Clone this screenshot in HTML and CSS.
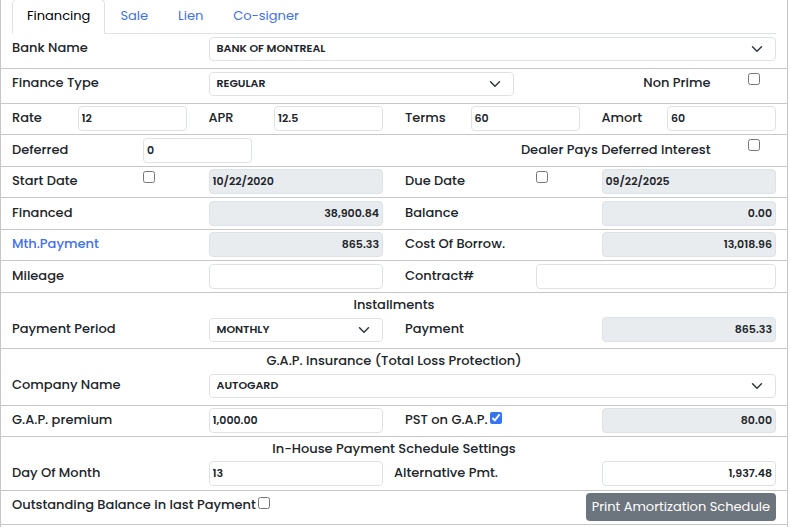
FILE: index.html
```
<!DOCTYPE html>
<html lang="en">

<head>
    <meta charset="UTF-8">
    <meta name="viewport" content="width=device-width, initial-scale=1.0">
    <title>Financing</title>
    <link rel="stylesheet" href="styles.css">
</head>

<body>
    <form class="panel">
        <!-- tabs -->
        <nav class="tabs">
            <a href="#financing" class="tab active">Financing</a>
            <a href="#sale" class="tab">Sale</a>
            <a href="#lien" class="tab">Lien</a>
            <a href="#cosigner" class="tab">Co-signer</a>
        </nav>

        <div class="row large">
            <label class="col-3" for="bank">Bank Name</label>
            <div class="col-9">
                <select id="bank"><option>BANK OF MONTREAL</option></select>
            </div>
        </div>

        <div class="row large">
            <label class="col-3" for="type">Finance Type</label>
            <div class="col-5">
                <select id="type"><option>REGULAR</option></select>
            </div>
            <label class="col-3 right" for="nonprime">Non Prime</label>
            <div class="col-1 center"><input type="checkbox" id="nonprime"></div>
        </div>

        <div class="row">
            <label class="col-1" for="rate">Rate</label>
            <div class="col-2"><input type="text" id="rate" value="12"></div>
            <label class="col-1" for="apr">APR</label>
            <div class="col-2"><input type="text" id="apr" value="12.5"></div>
            <label class="col-1" for="terms">Terms</label>
            <div class="col-2"><input type="text" id="terms" value="60"></div>
            <label class="col-1" for="amort">Amort</label>
            <div class="col-2"><input type="text" id="amort" value="60"></div>
        </div>

        <div class="row tall">
            <label class="col-2" for="deferred">Deferred</label>
            <div class="col-2"><input type="text" id="deferred" value="0"></div>
            <label class="col-7 right" for="dealer">Dealer Pays Deferred Interest</label>
            <div class="col-1 center"><input type="checkbox" id="dealer"></div>
        </div>

        <div class="row">
            <label class="col-2" for="startcheck">Start Date</label>
            <div class="col-1"><input type="checkbox" id="startcheck"></div>
            <div class="col-3"><input type="text" aria-label="Start Date" value="10/22/2020" disabled></div>
            <label class="col-2" for="duecheck">Due Date</label>
            <div class="col-1"><input type="checkbox" id="duecheck"></div>
            <div class="col-3"><input type="text" aria-label="Due Date" value="09/22/2025" disabled></div>
        </div>

        <div class="row tall">
            <label class="col-3" for="financed">Financed</label>
            <div class="col-3"><input type="text" id="financed" class="right" value="38,900.84" disabled></div>
            <label class="col-3" for="balance">Balance</label>
            <div class="col-3"><input type="text" id="balance" class="right" value="0.00" disabled></div>
        </div>

        <div class="row">
            <div class="col-3"><a href="#payment" class="link">Mth.Payment</a></div>
            <div class="col-3"><input type="text" aria-label="Mth.Payment" class="right" value="865.33" disabled></div>
            <label class="col-3" for="cost">Cost Of Borrow.</label>
            <div class="col-3"><input type="text" id="cost" class="right" value="13,018.96" disabled></div>
        </div>

        <div class="row tall">
            <label class="col-3" for="mileage">Mileage</label>
            <div class="col-3"><input type="text" id="mileage"></div>
            <label class="col-2" for="contract">Contract#</label>
            <div class="col-4"><input type="text" id="contract"></div>
        </div>

        <!-- installments -->
        <div class="row section">
            <h2 class="title">Installments</h2>
            <label class="col-3" for="period">Payment Period</label>
            <div class="col-3">
                <select id="period"><option>MONTHLY</option></select>
            </div>
            <label class="col-3" for="payment">Payment</label>
            <div class="col-3"><input type="text" id="payment" class="right" value="865.33" disabled></div>
        </div>

        <!-- G.A.P. -->
        <div class="row section gap">
            <h2 class="title">G.A.P. Insurance (Total Loss Protection)</h2>
            <label class="col-3" for="company">Company Name</label>
            <div class="col-9">
                <select id="company"><option>AUTOGARD</option></select>
            </div>
        </div>

        <div class="row">
            <label class="col-3" for="premium">G.A.P. premium</label>
            <div class="col-3"><input type="text" id="premium" value="1,000.00"></div>
            <div class="col-3 inline">
                <label for="pst">PST on G.A.P.</label>
                <input type="checkbox" id="pst" checked>
            </div>
            <div class="col-3"><input type="text" aria-label="PST amount" class="right" value="80.00" disabled></div>
        </div>

        <!-- in-house -->
        <div class="row house">
            <h2 class="title">In-House Payment Schedule Settings</h2>
            <label class="col-3" for="day">Day Of Month</label>
            <div class="col-3"><input type="text" id="day" value="13"></div>
            <label class="col-3 flush" for="alt">Alternative Pmt.</label>
            <div class="col-3"><input type="text" id="alt" class="right" value="1,937.48"></div>
        </div>

        <div class="row footer">
            <div class="inline">
                <label for="outstanding">Outstanding Balance in last Payment</label>
                <input type="checkbox" id="outstanding">
            </div>
            <button type="button" class="print">Print Amortization Schedule</button>
        </div>
    </form>
</body>

</html>
```
FILE: styles.css
```
* {
    box-sizing: border-box;
    margin: 0;
    padding: 0;
}

body {
    font-family: Poppins, Inter, "Open Sans", sans-serif;
    font-size: 13px;
    line-height: 24px;
    color: #212529;
    background: #fff;
}

.panel {
    margin-right: 3px;
    padding-bottom: 2px;
    border: 1px solid #c6c6c6;
    border-width: 0 1px;
    overflow: hidden;
}

/* tabs */
.tabs {
    display: flex;
    margin: -1px 11px 0;
    border-bottom: 1px solid #dee2e6;
}

.tab {
    height: 35px;
    margin-bottom: -1px;
    padding: 4px 14px;
    border: 1px solid transparent;
    border-radius: 5px 5px 0 0;
    color: #3d70f5;
    text-decoration: none;
}

.tab.active {
    color: #000;
    background: #fff;
    border-color: #dee2e6 #dee2e6 #fff;
}

/* rows */
.row {
    display: grid;
    grid-template-columns: repeat(12, 1fr);
    align-content: start;
    min-height: 31px;
    padding-top: 2px;
    border-bottom: 1px solid #c6c6c6;
}

.row.tall {
    min-height: 32px;
    padding-top: 3px;
}

.row.large {
    min-height: 35px;
}

.row.section {
    min-height: 56px;
    padding-top: 0;
}

.row.gap {
    min-height: 57px;
}

.row.house {
    min-height: 54px;
    padding-top: 0;
}

.row > * {
    min-width: 0;
    padding: 0 11px;
}

.col-1 { grid-column: span 1; }
.col-2 { grid-column: span 2; }
.col-3 { grid-column: span 3; }
.col-4 { grid-column: span 4; }
.col-5 { grid-column: span 5; }
.col-7 { grid-column: span 7; }
.col-9 { grid-column: span 9; }

.title {
    grid-column: 1 / -1;
    font-size: 13px;
    font-weight: 500;
    text-align: center;
}

label,
.link {
    font-weight: 500;
    white-space: nowrap;
}

.link {
    color: #3d70f5;
    text-decoration: none;
}

.right {
    text-align: right;
}

.center {
    display: flex;
    justify-content: center;
}

.row > .flush {
    padding-left: 0;
}

.inline {
    display: flex;
    gap: 2px;
}

/* controls */
input[type="text"],
select {
    display: block;
    width: 100%;
    height: 25px;
    padding: 0 3px;
    border: 1px solid #dee2e6;
    border-radius: 4px;
    font-family: inherit;
    font-size: 11px;
    font-weight: 600;
    color: #212529;
    background: #fff;
}

input[type="text"]:disabled {
    background: #e9ecef;
}

select {
    height: 24px;
    margin-top: 1px;
    padding: 0 32px 2px 7px;
    appearance: none;
    background: #fff url("data:image/svg+xml,%3Csvg xmlns='http://www.w3.org/2000/svg' viewBox='0 0 16 16'%3E%3Cpath fill='none' stroke='%23343a40' stroke-linecap='round' stroke-linejoin='round' stroke-width='2' d='m2 5 6 6 6-6'/%3E%3C/svg%3E") no-repeat right 12px center / 12px 12px;
}

input[type="checkbox"] {
    display: block;
    width: 12px;
    height: 12px;
    margin-top: 2px;
    accent-color: #3574f2;
}

.tall input[type="checkbox"] {
    margin-top: 1px;
}

.inline input[type="checkbox"] {
    margin-top: 4px;
}

/* footer */
.row.footer {
    display: flex;
    justify-content: space-between;
    min-height: 34px;
}

.footer > .print {
    height: 28px;
    margin-right: 11px;
    padding: 0 6px;
    border: 0;
    border-radius: 4px;
    font-family: inherit;
    font-size: 13px;
    color: #fff;
    background: #6c757d;
}
```
